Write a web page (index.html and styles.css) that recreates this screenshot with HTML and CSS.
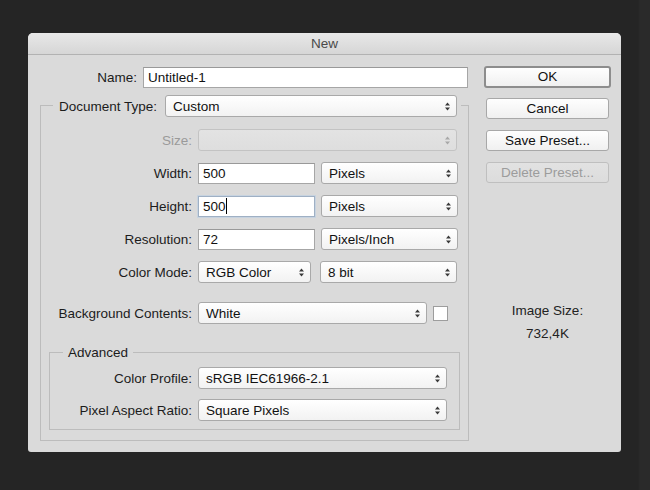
FILE: index.html
```html
<!DOCTYPE html>
<html>
<head>
<meta charset="utf-8">
<title>New</title>
<link rel="stylesheet" href="styles.css">
</head>
<body>
<div class="dialog">
  <div class="titlebar">New</div>
  <div class="content">
    <div class="main">
      <div class="row name-row">
        <span class="lbl name-lbl">Name:</span>
        <div class="input name-input">Untitled-1</div>
      </div>
      <div class="group">
        <div class="group-head">
          <span class="head-lbl">Document Type:</span>
          <div class="select doc-select"><span>Custom</span><svg class="arr" width="5" height="9" viewBox="0 0 5 9"><path d="M2.5 0.5L5 3.5H0Z M2.5 8.5L5 5.5H0Z"/></svg></div>
        </div>
        <div class="row first">
          <span class="lbl glbl dis">Size:</span>
          <div class="select disabled w-full"><span></span><svg class="arr" width="5" height="9" viewBox="0 0 5 9"><path d="M2.5 0.5L5 3.5H0Z M2.5 8.5L5 5.5H0Z"/></svg></div>
        </div>
        <div class="row">
          <span class="lbl glbl">Width:</span>
          <div class="input num">500</div>
          <div class="select unit"><span>Pixels</span><svg class="arr" width="5" height="9" viewBox="0 0 5 9"><path d="M2.5 0.5L5 3.5H0Z M2.5 8.5L5 5.5H0Z"/></svg></div>
        </div>
        <div class="row">
          <span class="lbl glbl">Height:</span>
          <div class="input num focus">500<span class="caret"></span></div>
          <div class="select unit"><span>Pixels</span><svg class="arr" width="5" height="9" viewBox="0 0 5 9"><path d="M2.5 0.5L5 3.5H0Z M2.5 8.5L5 5.5H0Z"/></svg></div>
        </div>
        <div class="row">
          <span class="lbl glbl">Resolution:</span>
          <div class="input num">72</div>
          <div class="select unit"><span>Pixels/Inch</span><svg class="arr" width="5" height="9" viewBox="0 0 5 9"><path d="M2.5 0.5L5 3.5H0Z M2.5 8.5L5 5.5H0Z"/></svg></div>
        </div>
        <div class="row">
          <span class="lbl glbl">Color Mode:</span>
          <div class="select mode"><span>RGB Color</span><svg class="arr" width="5" height="9" viewBox="0 0 5 9"><path d="M2.5 0.5L5 3.5H0Z M2.5 8.5L5 5.5H0Z"/></svg></div>
          <div class="select unit"><span>8 bit</span><svg class="arr" width="5" height="9" viewBox="0 0 5 9"><path d="M2.5 0.5L5 3.5H0Z M2.5 8.5L5 5.5H0Z"/></svg></div>
        </div>
        <div class="row bg-row">
          <span class="lbl glbl">Background Contents:</span>
          <div class="select bgsel"><span>White</span><svg class="arr" width="5" height="9" viewBox="0 0 5 9"><path d="M2.5 0.5L5 3.5H0Z M2.5 8.5L5 5.5H0Z"/></svg></div>
          <div class="swatch"></div>
        </div>
        <div class="advanced">
          <div class="adv-head">Advanced</div>
          <div class="row adv-first">
            <span class="lbl albl">Color Profile:</span>
            <div class="select adv-sel"><span>sRGB IEC61966-2.1</span><svg class="arr" width="5" height="9" viewBox="0 0 5 9"><path d="M2.5 0.5L5 3.5H0Z M2.5 8.5L5 5.5H0Z"/></svg></div>
          </div>
          <div class="row">
            <span class="lbl albl">Pixel Aspect Ratio:</span>
            <div class="select adv-sel"><span>Square Pixels</span><svg class="arr" width="5" height="9" viewBox="0 0 5 9"><path d="M2.5 0.5L5 3.5H0Z M2.5 8.5L5 5.5H0Z"/></svg></div>
          </div>
        </div>
      </div>
    </div>
    <div class="side">
      <div class="btn ok">OK</div>
      <div class="btn">Cancel</div>
      <div class="btn">Save Preset...</div>
      <div class="btn dis-btn">Delete Preset...</div>
      <div class="size-lbl">Image Size:</div>
      <div class="size-val">732,4K</div>
    </div>
  </div>
</div>
</body>
</html>
```

FILE: styles.css
```css
html, body {
  margin: 0;
  padding: 0;
}
body {
  width: 650px;
  height: 490px;
  overflow: hidden;
  background: linear-gradient(to right, #252525 0, #252525 638px, #2a2a2a 640px, #2a2a2a 100%);
  font-family: "Liberation Sans", Arial, sans-serif;
  font-size: 13.5px;
  color: #1c1c1c;
}
.dialog {
  margin: 33px 0 0 28px;
  width: 593px;
  height: 419px;
  background: #dadada;
  border-radius: 5px 5px 3px 3px;
  overflow: hidden;
  display: flex;
  flex-direction: column;
}
.titlebar {
  height: 21px;
  line-height: 22px;
  text-align: center;
  color: #4a4a4a;
  background: linear-gradient(#e8e8e8, #d6d6d6);
  border-bottom: 1px solid #b2b2b2;
}
.content {
  display: flex;
  padding: 12px 10px 0 12px;
}
.main {
  width: 429px;
  flex: none;
}
.row {
  display: flex;
  align-items: center;
  height: 22px;
  margin-top: 11px;
}
.lbl {
  flex: none;
  text-align: right;
  margin-right: 6px;
  white-space: nowrap;
}
.name-row {
  margin-top: 0;
  height: 21px;
}
.name-lbl { width: 97px; }
.name-input { width: 325px; }
.input {
  box-sizing: border-box;
  height: 21px;
  line-height: 19px;
  padding-left: 4px;
  background: #fff;
  border: 1px solid #a6a6a6;
  border-top-color: #999;
  flex: none;
  color: #111;
  display: flex;
  align-items: center;
}
.input.focus {
  border-color: #9fb0c4;
  box-shadow: 0 0 0 1px #c7d3e0;
}
.caret {
  display: inline-block;
  width: 1px;
  height: 16px;
  background: #000;
}
.select {
  box-sizing: border-box;
  height: 22px;
  flex: none;
  display: flex;
  align-items: center;
  justify-content: space-between;
  padding: 0 6px 0 7px;
  border: 1px solid #a9a9a9;
  border-radius: 3px;
  background: linear-gradient(#ffffff, #f2f2f2);
  color: #111;
  white-space: nowrap;
}
.arr path { fill: #3a3a3a; }
.select.disabled {
  background: linear-gradient(#e3e3e3, #dedede);
  border-color: #c3c3c3;
}
.select.disabled .arr path { fill: #a8a8a8; }
.dis { color: #9a9a9a; }

.group {
  margin-top: 17px;
  width: 429px;
  box-sizing: border-box;
  height: 336px;
  border: 1px solid #bcbcbc;
  padding-bottom: 10px;
}
.group-head {
  margin: -11px 7px 0 12px;
  height: 22px;
  padding: 0 4px 0 6px;
  background: #dadada;
  display: flex;
  align-items: center;
}
.head-lbl {
  flex: 1;
  white-space: nowrap;
}
.doc-select { width: 292px; }
.row.first { margin-top: 12px; }
.glbl { width: 151px; }
.w-full { width: 259px; }
.num { width: 117px; margin-right: 6px; }
.unit { width: 137px; }
.mode { width: 113px; margin-right: 9px; }
.bg-row { margin-top: 19px; }
.bgsel { width: 229px; }
.swatch {
  margin-left: 6px;
  width: 15px;
  height: 15px;
  box-sizing: border-box;
  background: #fff;
  border: 1px solid #9d9d9d;
}
.advanced {
  margin: 28px 8px 0 8px;
  border: 1px solid #bcbcbc;
  padding-bottom: 8px;
}
.adv-head {
  display: block;
  width: max-content;
  margin: -8px 0 0 13px;
  padding: 0 5px;
  height: 16px;
  line-height: 16px;
  background: #dadada;
}
.row.adv-first { margin-top: 6px; }
.advanced .row:not(.adv-first) { margin-top: 10px; }
.albl { width: 142px; }
.adv-sel { width: 249px; }

.side {
  margin-left: 15px;
  width: 127px;
  flex: none;
  display: flex;
  flex-direction: column;
  align-items: center;
}
.btn {
  box-sizing: border-box;
  width: 123px;
  height: 21px;
  line-height: 19px;
  margin-top: 11px;
  text-align: center;
  border: 1px solid #a8a8a8;
  border-radius: 3px;
  background: linear-gradient(#fefefe, #f0f0f0);
  color: #111;
}
.btn.ok {
  width: 127px;
  height: 22px;
  line-height: 18px;
  margin-top: -1px;
  border: 2px solid #8d8d8d;
}
.ok + .btn { margin-top: 10px; }
.dis-btn {
  color: #9c9c9c;
  border-color: #bfbfbf;
  background: linear-gradient(#e2e2e2, #dcdcdc);
}
.size-lbl {
  margin-top: 120px;
  line-height: 16px;
  color: #222;
}
.size-val {
  margin-top: 7px;
  line-height: 16px;
  color: #222;
}
```
